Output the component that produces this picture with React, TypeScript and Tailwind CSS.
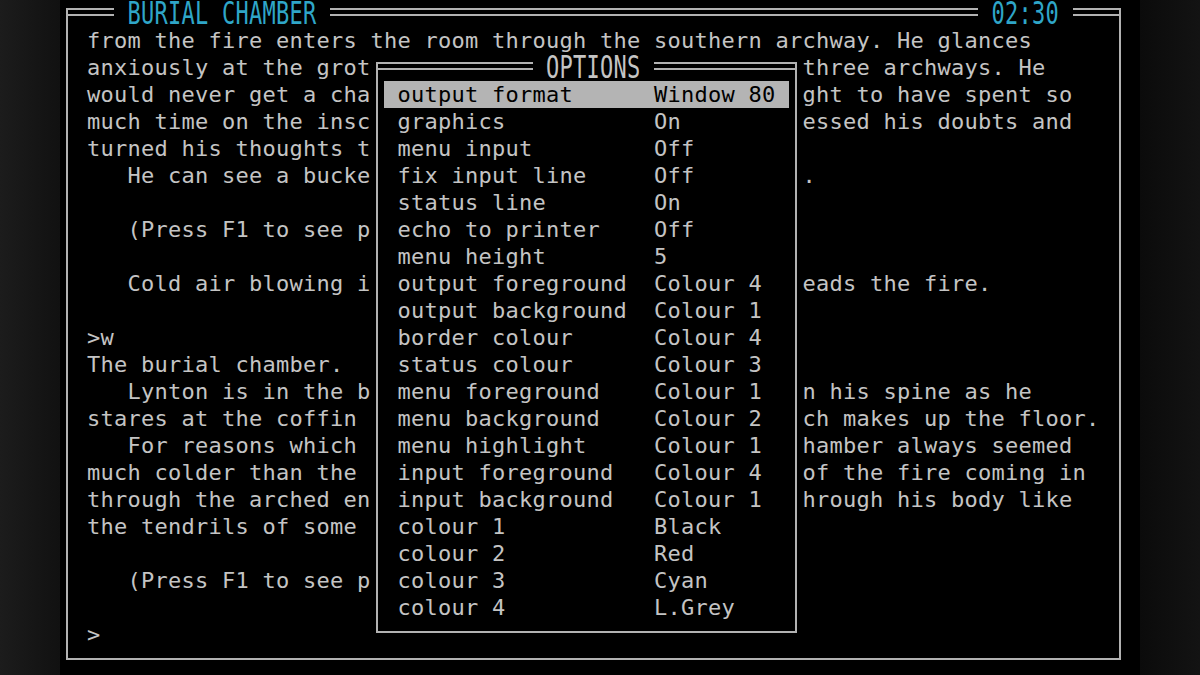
const mainRows: [string, string][] = [
  ['from the fire enters the room through the southern archway. He glances', ''],
  ['anxiously at the grot', 'three archways. He'],
  ['would never get a cha', 'ght to have spent so'],
  ['much time on the insc', 'essed his doubts and'],
  ['turned his thoughts t', ''],
  ['   He can see a bucke', '.'],
  ['', ''],
  ['   (Press F1 to see p', ''],
  ['', ''],
  ['   Cold air blowing i', 'eads the fire.'],
  ['', ''],
  ['>w', ''],
  ['The burial chamber.', ''],
  ['   Lynton is in the b', 'n his spine as he'],
  ['stares at the coffin', 'ch makes up the floor.'],
  ['   For reasons which', 'hamber always seemed'],
  ['much colder than the', 'of the fire coming in'],
  ['through the arched en', 'hrough his body like'],
  ['the tendrils of some', ''],
  ['', ''],
  ['   (Press F1 to see p', ''],
  ['', ''],
  ['>', ''],
];

const options: [string, string][] = [
  ['output format', 'Window 80'],
  ['graphics', 'On'],
  ['menu input', 'Off'],
  ['fix input line', 'Off'],
  ['status line', 'On'],
  ['echo to printer', 'Off'],
  ['menu height', '5'],
  ['output foreground', 'Colour 4'],
  ['output background', 'Colour 1'],
  ['border colour', 'Colour 4'],
  ['status colour', 'Colour 3'],
  ['menu foreground', 'Colour 1'],
  ['menu background', 'Colour 2'],
  ['menu highlight', 'Colour 1'],
  ['input foreground', 'Colour 4'],
  ['input background', 'Colour 1'],
  ['colour 1', 'Black'],
  ['colour 2', 'Red'],
  ['colour 3', 'Cyan'],
  ['colour 4', 'L.Grey'],
];

// one double rule segment of the frame's top edge
function Rule({ className }: { className: string }) {
  return <div className={`h-[8px] shrink-0 border-y-2 border-[#b2b2b2] ${className}`} />;
}

function Title({ text, className }: { text: string; className: string }) {
  return (
    <div className={`-mt-[8px] h-[27px] shrink-0 scale-y-[1.42] whitespace-pre leading-[27px] ${className}`}>
      {text}
    </div>
  );
}

function OptionsBox() {
  return (
    <div className="absolute left-[308px] top-[54px] flex w-[421px] flex-col border-x-2 border-b-2 border-[#b2b2b2] bg-black">
      <div className="-mx-[2px] flex h-[19px] items-start">
        <Rule className="w-[156.5px]" />
        <div className="w-[13.5px] shrink-0" />
        <Title text="OPTIONS" className="w-[94.5px] text-[#c4c4c4]" />
        <div className="w-[13.5px] shrink-0" />
        <Rule className="flex-1" />
      </div>
      {options.map(([label, value], i) => (
        <div
          key={label}
          className={`mx-[6px] flex h-[27px] whitespace-pre pl-[13.5px] leading-[27px] ${
            i === 0 ? 'bg-[#b4b4b4] text-black' : 'text-[#c4c4c4]'
          }`}
        >
          <span className="w-[256.5px] shrink-0">{label}</span>
          <span>{value}</span>
        </div>
      ))}
      <div className="h-[10px]" />
    </div>
  );
}

export default function App() {
  return (
    <div className="flex h-[675px] w-[1200px] overflow-hidden bg-black font-['DejaVu_Sans_Mono','Liberation_Mono',monospace] text-[22px] tracking-[0.255px]">
      <div className="h-full w-[60px] shrink-0 bg-linear-to-r from-[#1c1c1c] to-[#111111]" />

      <div className="h-full w-[1080px] shrink-0 overflow-hidden bg-black pt-[8px]">
        <div className="relative ml-[6px] flex w-[1055px] flex-col border-x-2 border-b-2 border-[#b2b2b2]">
          <div className="-mx-[2px] flex h-[19px] items-start">
            <Rule className="w-[48px]" />
            <div className="w-[13.5px] shrink-0" />
            <Title text="BURIAL CHAMBER" className="w-[189px] text-[#2fa6c8]" />
            <div className="w-[13.5px] shrink-0" />
            <Rule className="w-[648px]" />
            <div className="w-[13.5px] shrink-0" />
            <Title text="02:30" className="w-[67.5px] text-[#2fa6c8]" />
            <div className="w-[13.5px] shrink-0" />
            <Rule className="flex-1" />
          </div>

          {mainRows.map(([left, right], i) => (
            <div key={i} className="flex h-[27px] whitespace-pre pl-[19px] leading-[27px] text-[#c4c4c4]">
              <span className={right ? 'w-[715.5px] shrink-0' : ''}>{left}</span>
              {right && <span>{right}</span>}
            </div>
          ))}
          <div className="h-[10px]" />

          <OptionsBox />
        </div>
      </div>

      <div className="h-full flex-1 bg-linear-to-r from-[#0b0b0b] to-[#131313]" />
    </div>
  );
}
